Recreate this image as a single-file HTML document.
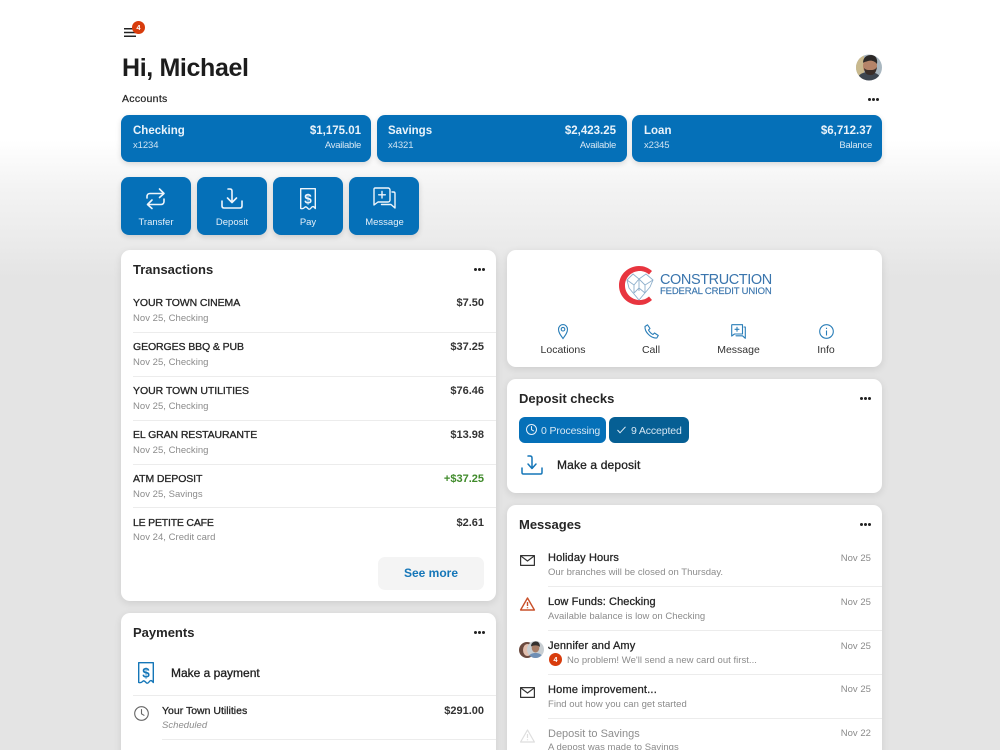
<!DOCTYPE html>
<html><head><meta charset="utf-8"><style>
html,body{margin:0;padding:0;width:1000px;height:750px;overflow:hidden}
#p{position:absolute;left:0;top:0;width:1000px;height:750px;overflow:hidden;background:linear-gradient(#fff 0,#fff 140px,#f3f3f3 190px,#ebebeb 240px,#e4e4e4 278px,#e4e4e4 100%);font-family:"Liberation Sans",sans-serif;color:#222}
.b{position:absolute;box-sizing:border-box}
.c{position:absolute;background:#fff;border-radius:9px;box-shadow:0 2px 8px rgba(0,0,0,.1)}
.blue{position:absolute;background:#0570b8;border-radius:8px;box-shadow:0 2px 6px rgba(0,0,0,.14)}
.t{position:absolute;white-space:nowrap;line-height:16px;height:16px;margin-top:1px}
.r{text-align:right}
.m{transform:translateX(-50%)}
.acc{font-size:11.5px;font-weight:bold;color:#eaf3fa}
.sm{font-size:9.5px;letter-spacing:-.1px;color:#cfe3f2}
.al{font-size:9.5px;letter-spacing:-.25px;color:#d8e8f4}
.lb{font-size:9.5px;color:#e4eff8}
.h{font-size:13px;font-weight:bold;color:#262626}
.n{font-size:11px;font-weight:normal;-webkit-text-stroke:.3px #262626;color:#262626}
.u{font-size:10.5px;letter-spacing:-.1px}
.s{font-size:9.5px;letter-spacing:.03px;color:#8b8b8b}
.a{font-size:11px;font-weight:bold;color:#333}
.i{font-size:10.5px;color:#333}
.l{position:absolute;height:1px;background:#ececec}
.d{position:absolute;width:11px;height:3px;margin-top:1px}
.d i{position:absolute;top:0;width:3.2px;height:3.2px;border-radius:50%;background:#222}
.d i:nth-child(1){left:0}.d i:nth-child(2){left:4px}.d i:nth-child(3){left:8px}
svg{position:absolute;overflow:visible;fill:none}
.badge{position:absolute;border-radius:50%;background:#d83c0c;color:#fff;font-weight:bold;font-size:7.5px;text-align:center}
</style></head><body><div id="p">

<svg style="left:124px;top:28px" width="12" height="9" stroke="#222" stroke-width="1.5"><path d="M0 .7H12M0 4.500H12M0 8.300H12"/></svg>
<div class="badge" style="left:132px;top:21px;width:13px;height:13px;line-height:13px">4</div>

<div class="t" style="left:122px;top:52px;margin:0;height:32px;line-height:32px;font-size:25px;font-weight:bold;color:#1c1c1c;letter-spacing:-.36px">Hi, Michael</div>

<svg style="left:856px;top:54px" width="26" height="27">
<defs><clipPath id="av"><circle cx="13" cy="13.500" r="13"/></clipPath></defs>
<g clip-path="url(#av)"><rect width="26" height="27" fill="#a9b7c0"/><rect x="0" y="0" width="8" height="27" fill="#c9b98e"/><path d="M0 27C2 20 7 18 13 18S24 20 26 27Z" fill="#3d4650"/><ellipse cx="14" cy="12" rx="7" ry="8.500" fill="#b58469"/><path d="M7 9C7 3 11 1 15 1S22 4 21 10C19 7 15 6 12 7S8 8 7 9Z" fill="#2c2927"/><path d="M8 14C9 21 12 21 15 21S20 19 21 13C19 16 17 16 14 16S10 16 8 14Z" fill="#3a2e29"/></g>
</svg>

<div class="t" style="left:122px;top:90px;font-size:10.5px;letter-spacing:.3px;color:#222;-webkit-text-stroke:.2px #222">Accounts</div>
<div class="d" style="left:868px;top:97px"><i></i><i></i><i></i></div>

<!-- account cards -->
<div class="blue" style="left:121px;top:115px;width:250px;height:47px"></div>
<div class="blue" style="left:377px;top:115px;width:250px;height:47px"></div>
<div class="blue" style="left:632px;top:115px;width:250px;height:47px"></div>

<div class="t acc" style="left:133px;top:122px">Checking</div>
<div class="t sm" style="left:133px;top:137px">x1234</div>
<div class="t acc r" style="right:639px;top:122px">$1,175.01</div>
<div class="t al r" style="right:639px;top:137px">Available</div>

<div class="t acc" style="left:388px;top:122px">Savings</div>
<div class="t sm" style="left:388px;top:137px">x4321</div>
<div class="t acc r" style="right:384px;top:122px">$2,423.25</div>
<div class="t al r" style="right:384px;top:137px">Available</div>

<div class="t acc" style="left:644px;top:122px">Loan</div>
<div class="t sm" style="left:644px;top:137px">x2345</div>
<div class="t acc r" style="right:128px;top:122px">$6,712.37</div>
<div class="t al r" style="right:128px;top:137px">Balance</div>

<!-- actions -->
<div class="blue" style="left:121px;top:177px;width:70px;height:58px"></div>
<div class="blue" style="left:197px;top:177px;width:70px;height:58px"></div>
<div class="blue" style="left:273px;top:177px;width:70px;height:58px"></div>
<div class="blue" style="left:349px;top:177px;width:70px;height:58px"></div>

<svg style="left:146px;top:188px" width="20" height="22" stroke="#eef5fb" stroke-width="1.6" stroke-linecap="round" stroke-linejoin="round"><path d="M1 10V8.500C1 6.500 2.500 5.500 4 5.500H18M13.500 1L18 5.500L13.500 9.500"/><path d="M18 11V13.500C18 15.500 16.500 16.500 15 16.500H1.500M6 12L1.500 16.500L6 20.500"/></svg>
<svg style="left:221px;top:188px" width="22" height="22" stroke="#eef5fb" stroke-width="1.6" stroke-linecap="round" stroke-linejoin="round"><path d="M7 1H9C10.500 1 11 2 11 3V14M6.500 10L11 14.500L15.500 10"/><path d="M1 13V18C1 19.500 2 20 3 20H19C20 20 21 19.500 21 18V13"/></svg>
<svg style="left:300px;top:188px" width="16" height="22" stroke="#eef5fb" stroke-width="1.4" stroke-linejoin="round"><path d="M.7 .7H15.300V20.500C13.500 18 12.500 18 11 20S8.500 21 8 20.500 6 18 4.800 19.300 2.500 21 .7 20.500Z"/><text x="8" y="15.500" text-anchor="middle" font-family="Liberation Sans" font-weight="bold" font-size="13.500" fill="#eef5fb" stroke="none">$</text></svg>
<svg style="left:373px;top:187px" width="23" height="23" stroke="#eef5fb" stroke-width="1.4" stroke-linecap="round" stroke-linejoin="round"><path d="M2 1H15C16 1 17 1.700 17 3V13C17 14.300 16 15 15 15H5L1 18V2C1 1.500 1.500 1 2 1Z"/><path d="M19 5H20.500C21.300 5 22 5.500 22 6.500V21L18 17.500H8.500"/><path d="M9 4.500V11M5.700 7.800H12.300"/></svg>

<div class="t m lb" style="left:156px;top:214px">Transfer</div>
<div class="t m lb" style="left:232px;top:214px">Deposit</div>
<div class="t m lb" style="left:308px;top:214px">Pay</div>
<div class="t m lb" style="left:384.500px;top:214px">Message</div>

<!-- Transactions -->
<div class="c" style="left:121px;top:250px;width:375px;height:351px"></div>
<div class="t h" style="left:133px;top:261px">Transactions</div>
<div class="d" style="left:474px;top:267px"><i></i><i></i><i></i></div>

<div class="t n u" style="left:133px;top:294px">YOUR TOWN CINEMA</div><div class="t s" style="left:133px;top:310px">Nov 25, Checking</div><div class="t a r" style="right:516px;top:294px">$7.50</div>
<div class="l" style="left:133px;top:332px;width:363px"></div>
<div class="t n u" style="left:133px;top:338px">GEORGES BBQ &amp; PUB</div><div class="t s" style="left:133px;top:354px">Nov 25, Checking</div><div class="t a r" style="right:516px;top:338px">$37.25</div>
<div class="l" style="left:133px;top:376px;width:363px"></div>
<div class="t n u" style="left:133px;top:382px;letter-spacing:-.05px">YOUR TOWN UTILITIES</div><div class="t s" style="left:133px;top:398px">Nov 25, Checking</div><div class="t a r" style="right:516px;top:382px">$76.46</div>
<div class="l" style="left:133px;top:420px;width:363px"></div>
<div class="t n u" style="left:133px;top:426px">EL GRAN RESTAURANTE</div><div class="t s" style="left:133px;top:442px">Nov 25, Checking</div><div class="t a r" style="right:516px;top:426px">$13.98</div>
<div class="l" style="left:133px;top:464px;width:363px"></div>
<div class="t n u" style="left:133px;top:470px">ATM DEPOSIT</div><div class="t s" style="left:133px;top:486px">Nov 25, Savings</div><div class="t a r" style="right:516px;top:470px;color:#3f8a2a">+$37.25</div>
<div class="l" style="left:133px;top:507px;width:363px"></div>
<div class="t n u" style="left:133px;top:514px;letter-spacing:-.2px">LE PETITE CAFE</div><div class="t s" style="left:133px;top:529px">Nov 24, Credit card</div><div class="t a r" style="right:516px;top:514px">$2.61</div>

<div class="b" style="left:378px;top:557px;width:106px;height:33px;background:#f4f4f4;border-radius:7px"></div>
<div class="t m" style="left:431px;top:564px;font-size:12px;font-weight:bold;color:#1576b8">See more</div>

<!-- Payments -->
<div class="c" style="left:121px;top:613px;width:375px;height:160px"></div>
<div class="t h" style="left:133px;top:624px">Payments</div>
<div class="d" style="left:474px;top:630px"><i></i><i></i><i></i></div>
<svg style="left:138px;top:662px" width="16" height="22" stroke="#1576b8" stroke-width="1.4" stroke-linejoin="round"><path d="M.7 .7H15.300V20.500C13.500 18 12.500 18 11 20S8.500 21 8 20.500 6 18 4.800 19.300 2.500 21 .7 20.500Z"/><text x="8" y="15.500" text-anchor="middle" font-family="Liberation Sans" font-weight="bold" font-size="13.500" fill="#1576b8" stroke="none">$</text></svg>
<div class="t" style="left:171px;top:664px;font-size:12px;color:#222;-webkit-text-stroke:.3px #222">Make a payment</div>
<div class="l" style="left:133px;top:695px;width:363px"></div>
<svg style="left:134px;top:706px" width="15" height="15" stroke="#666" stroke-width="1.1" stroke-linecap="round"><circle cx="7.500" cy="7.500" r="6.800"/><path d="M7.500 3.500V7.800L10 9.300"/></svg>
<div class="t n" style="left:162px;top:702px;font-size:10.500px">Your Town Utilities</div>
<div class="t s" style="left:162px;top:717px;font-style:italic">Scheduled</div>
<div class="t a r" style="right:516px;top:702px">$291.00</div>
<div class="l" style="left:162px;top:739px;width:334px"></div>

<!-- Logo card -->
<div class="c" style="left:507px;top:250px;width:375px;height:117px"></div>
<svg style="left:618px;top:265px" width="36" height="42">
<path d="M34 6C30 2.500 26 1 21 1C10 1 1 9.500 1 20.500S10 40 21 40C26 40 30 38.500 34 35L31 31.500C28 34 25 35 22 35C13.500 35 7 28.500 7 20.500S13.500 6 22 6C25 6 28 7 31 9.500Z" fill="#e8353f"/>
<g stroke="#8fb0cc" stroke-width=".9" stroke-linejoin="round"><path d="M9 15L15 9L21 14L28 9L35 15L32 22L21 35L11 23Z"/><path d="M9 15L16 20L21 14L27 20L35 15M16 20V28M27 20V28M21 14V26M16 28L21 23L27 28"/></g>
</svg>
<div class="t" style="left:660px;top:271px;font-size:14.500px;letter-spacing:-.42px;color:#3a75ad">CONSTRUCTION</div>
<div class="t" style="left:660px;top:283px;font-size:9.500px;letter-spacing:-.15px;color:#3a75ad;-webkit-text-stroke:.15px #3a75ad">FEDERAL CREDIT UNION</div>

<svg style="left:558px;top:324px" width="10" height="15" stroke="#2a7eb8" stroke-width="1.1"><path d="M5 14.500C2.500 11 .5 8.500 .5 5.300A4.500 4.700 0 0 1 9.500 5.300C9.500 8.500 7.500 11 5 14.500Z"/><circle cx="5" cy="5.200" r="1.800"/></svg>
<svg style="left:644px;top:324px" width="15" height="15" stroke="#2a7eb8" stroke-width="1.1" stroke-linejoin="round"><path d="M1 2.500L3.500 .8L6 4.500L4.500 6C5.500 8 7 9.500 9 10.500L10.500 9L14.300 11.500L12.800 14C7 14.500 .5 8 1 2.500Z"/></svg>
<svg style="left:731px;top:324px" width="15" height="15" stroke="#2a7eb8" stroke-width="1.1" stroke-linejoin="round" stroke-linecap="round"><path d="M1 .7H11.500V10H3.500L.7 12V1Z"/><path d="M13 3H14.300V14.300L11.500 11.800H5"/><path d="M6 3.300V7.300M4 5.300H8"/></svg>
<svg style="left:819px;top:324px" width="15" height="15" stroke="#2a7eb8" stroke-width="1.1"><circle cx="7.500" cy="7.500" r="6.800"/><path d="M7.500 6.500V11.500M7.500 3.800V5"/></svg>
<div class="t m i" style="left:563px;top:341px">Locations</div>
<div class="t m i" style="left:651px;top:341px">Call</div>
<div class="t m i" style="left:738.500px;top:341px">Message</div>
<div class="t m i" style="left:826px;top:341px">Info</div>

<!-- Deposit checks -->
<div class="c" style="left:507px;top:379px;width:375px;height:114px"></div>
<div class="t h" style="left:519px;top:390px">Deposit checks</div>
<div class="d" style="left:860px;top:396px"><i></i><i></i><i></i></div>
<div class="b" style="left:519px;top:417px;width:87px;height:26px;background:#0570b8;border-radius:6px"></div>
<div class="b" style="left:609px;top:417px;width:80px;height:26px;background:#065f94;border-radius:6px"></div>
<svg style="left:526px;top:424px" width="11" height="11" stroke="#e4eff8" stroke-width="1" stroke-linecap="round"><circle cx="5.500" cy="5.500" r="5"/><path d="M5.500 2.500V5.700L7.500 6.800"/></svg>
<svg style="left:617px;top:426px" width="9" height="8" stroke="#e4eff8" stroke-width="1"><path d="M.5 4L3 6.800L8.500 .8"/></svg>
<div class="t" style="left:541px;top:422px;font-size:10.500px;letter-spacing:-.13px;color:#d6e7f4">0 Processing</div>
<div class="t" style="left:631px;top:422px;font-size:10.500px;letter-spacing:-.13px;color:#d6e7f4">9 Accepted</div>
<svg style="left:521px;top:455px" width="22" height="20" stroke="#1576b8" stroke-width="1.5" stroke-linecap="round" stroke-linejoin="round"><path d="M7 1H9C10.500 1 11 2 11 3V13M7 9L11 13.500L15 9"/><path d="M1 13V17.500C1 18.500 1.500 19 2.500 19H19.500C20.500 19 21 18.500 21 17.500V13"/></svg>
<div class="t" style="left:557px;top:456px;font-size:12px;letter-spacing:.15px;color:#222;-webkit-text-stroke:.3px #222">Make a deposit</div>

<!-- Messages -->
<div class="c" style="left:507px;top:505px;width:375px;height:270px"></div>
<div class="t h" style="left:519px;top:516px">Messages</div>
<div class="d" style="left:860px;top:522px"><i></i><i></i><i></i></div>

<svg style="left:520px;top:555px" width="15" height="11" stroke="#333" stroke-width="1.2" stroke-linejoin="round"><rect x=".6" y=".6" width="13.800" height="9.800"/><path d="M.6 .8L7.500 6L14.400 .8"/></svg>
<div class="t n" style="left:548px;top:549px;letter-spacing:.15px">Holiday Hours</div>
<div class="t s" style="left:548px;top:564px">Our branches will be closed on Thursday.</div>
<div class="t s r" style="right:129px;top:550px">Nov 25</div>
<div class="l" style="left:548px;top:586px;width:334px"></div>

<svg style="left:520px;top:597px" width="15" height="14" stroke="#c9502a" stroke-width="1.4" stroke-linejoin="round"><path d="M7.500 1L14.400 13H.6Z"/><path d="M7.500 5V9M7.500 10.200V11.200"/></svg>
<div class="t n" style="left:548px;top:593px;letter-spacing:.1px">Low Funds: Checking</div>
<div class="t s" style="left:548px;top:608px">Available balance is low on Checking</div>
<div class="t s r" style="right:129px;top:594px">Nov 25</div>
<div class="l" style="left:548px;top:630px;width:334px"></div>

<svg style="left:519px;top:640px" width="25" height="19">
<defs><clipPath id="a1"><circle cx="8" cy="10" r="8"/></clipPath><clipPath id="a2"><circle cx="16.500" cy="9.500" r="8.500"/></clipPath></defs>
<g clip-path="url(#a1)"><rect width="17" height="19" fill="#6b4a3f"/><ellipse cx="8.500" cy="10" rx="4.500" ry="6" fill="#e2bfae"/></g>
<g clip-path="url(#a2)"><circle cx="16.500" cy="9.500" r="9" fill="#c8ced2"/><path d="M8 19C10 14 13 13 16.500 13S23 14 25 19Z" fill="#6f8fb5"/><ellipse cx="16.500" cy="8" rx="3.800" ry="4.500" fill="#a77d66"/><path d="M12 6.500C12 2.500 15 1.500 17 1.500S21 3 21 7C19 5 15 5 12 6.500Z" fill="#33302e"/></g>
</svg>
<div class="t n" style="left:548px;top:637px;letter-spacing:.15px">Jennifer and Amy</div>
<div class="badge" style="left:549px;top:653px;width:13px;height:13px;line-height:13px">4</div>
<div class="t s" style="left:567px;top:652px">No problem! We'll send a new card out first...</div>
<div class="t s r" style="right:129px;top:638px">Nov 25</div>
<div class="l" style="left:548px;top:674px;width:334px"></div>

<svg style="left:520px;top:687px" width="15" height="11" stroke="#333" stroke-width="1.2" stroke-linejoin="round"><rect x=".6" y=".6" width="13.800" height="9.800"/><path d="M.6 .8L7.500 6L14.400 .8"/></svg>
<div class="t n" style="left:548px;top:681px;letter-spacing:.2px">Home improvement...</div>
<div class="t s" style="left:548px;top:696px">Find out how you can get started</div>
<div class="t s r" style="right:129px;top:681px">Nov 25</div>
<div class="l" style="left:548px;top:718px;width:334px"></div>

<svg style="left:520px;top:729px" width="15" height="14" stroke="#dedede" stroke-width="1.2" stroke-linejoin="round"><path d="M7.500 1L14.400 13H.6Z"/><path d="M7.500 5V9M7.500 10.200V11.200"/></svg>
<div class="t" style="left:548px;top:725px;font-size:11px;color:#8e8e8e">Deposit to Savings</div>
<div class="t s" style="left:548px;top:739px">A depost was made to Savings</div>
<div class="t s r" style="right:129px;top:725px">Nov 22</div>

</div></body></html>
